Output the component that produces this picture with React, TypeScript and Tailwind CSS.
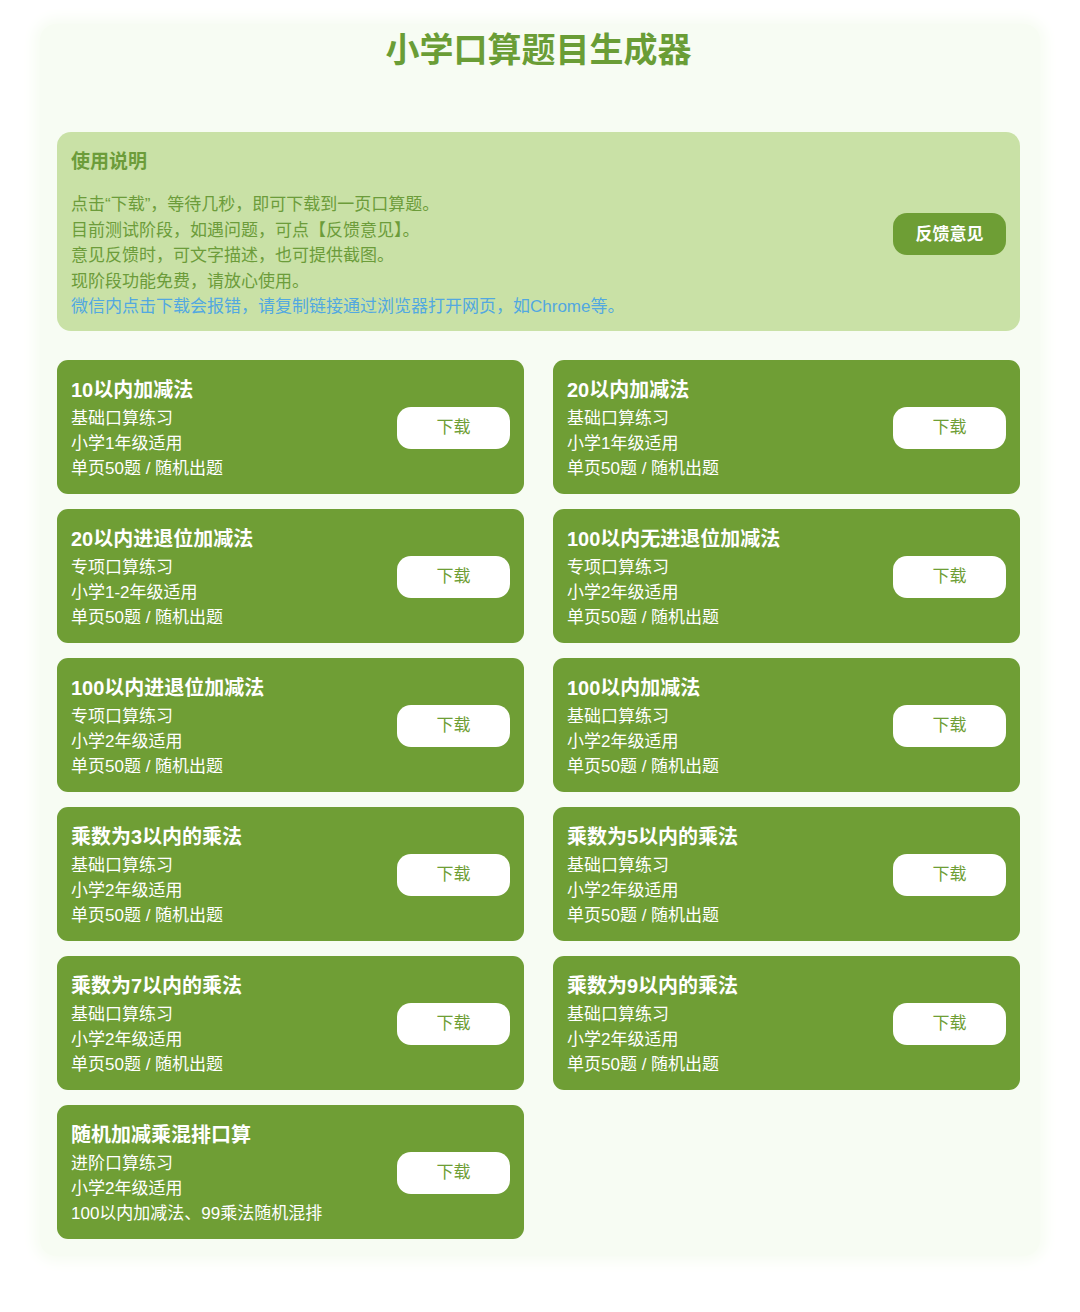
const cards = [
  { title: '10以内加减法', kind: '基础口算练习', grade: '小学1年级适用', note: '单页50题 / 随机出题' },
  { title: '20以内加减法', kind: '基础口算练习', grade: '小学1年级适用', note: '单页50题 / 随机出题' },
  { title: '20以内进退位加减法', kind: '专项口算练习', grade: '小学1-2年级适用', note: '单页50题 / 随机出题' },
  { title: '100以内无进退位加减法', kind: '专项口算练习', grade: '小学2年级适用', note: '单页50题 / 随机出题' },
  { title: '100以内进退位加减法', kind: '专项口算练习', grade: '小学2年级适用', note: '单页50题 / 随机出题' },
  { title: '100以内加减法', kind: '基础口算练习', grade: '小学2年级适用', note: '单页50题 / 随机出题' },
  { title: '乘数为3以内的乘法', kind: '基础口算练习', grade: '小学2年级适用', note: '单页50题 / 随机出题' },
  { title: '乘数为5以内的乘法', kind: '基础口算练习', grade: '小学2年级适用', note: '单页50题 / 随机出题' },
  { title: '乘数为7以内的乘法', kind: '基础口算练习', grade: '小学2年级适用', note: '单页50题 / 随机出题' },
  { title: '乘数为9以内的乘法', kind: '基础口算练习', grade: '小学2年级适用', note: '单页50题 / 随机出题' },
  { title: '随机加减乘混排口算', kind: '进阶口算练习', grade: '小学2年级适用', note: '100以内加减法、99乘法随机混排' }
]

const tips = [
  '点击“下载”，等待几秒，即可下载到一页口算题。',
  '目前测试阶段，如遇问题，可点【反馈意见】。',
  '意见反馈时，可文字描述，也可提供截图。',
  '现阶段功能免费，请放心使用。'
]

export default function App() {
  return (
    <div className="min-h-[1312px] bg-white pt-[24px] font-['Liberation_Sans','Noto_Sans_CJK_SC',sans-serif]">
      <div className="ml-[40px] w-[1000px] rounded-2xl bg-[#f7fcf3] pb-[17px] pl-[17px] pr-[20px] pt-[6px] shadow-[0_0_14px_6px_#f7fcf3]">
        <h1 className="mb-[62px] text-center text-[34px] font-bold leading-[40px] text-[#6a9d36]">
          小学口算题目生成器
        </h1>

        <div className="flex items-center rounded-[14px] bg-[#c9e1a6] pb-[11px] pl-[14px] pr-[14px] pt-[17px]">
          <div className="flex-1">
            <h2 className="text-[19px] font-bold leading-[26px] text-[#6c9c3a]">使用说明</h2>
            <div className="mt-[17px] text-[17px] leading-[25.5px] text-[#6c9c3a]">
              {tips.map((t, i) => (
                <p key={i}>{t}</p>
              ))}
              <p className="text-[#52a8e0]">微信内点击下载会报错，请复制链接通过浏览器打开网页，如Chrome等。</p>
            </div>
          </div>
          <button className="h-[42px] w-[113px] rounded-[14px] bg-[#6e9e35] text-[17px] font-bold text-white">
            反馈意见
          </button>
        </div>

        <div className="mt-[29px] grid grid-cols-2 gap-x-[29px] gap-y-[15px]">
          {cards.map((c, i) => (
            <div key={i} className="flex items-center rounded-[11px] bg-[#6f9e35] px-[14px] pb-[13px] pt-[16px] text-white">
              <div className="flex-1">
                <h3 className="text-[20px] font-bold leading-[28px]">{c.title}</h3>
                <div className="mt-[2px] text-[17px] leading-[25px]">
                  <p>{c.kind}</p>
                  <p>{c.grade}</p>
                  <p>{c.note}</p>
                </div>
              </div>
              <button className="h-[42px] w-[113px] rounded-[14px] bg-white text-[17px] text-[#6e9e35]">
                下载
              </button>
            </div>
          ))}
        </div>
      </div>
    </div>
  )
}
